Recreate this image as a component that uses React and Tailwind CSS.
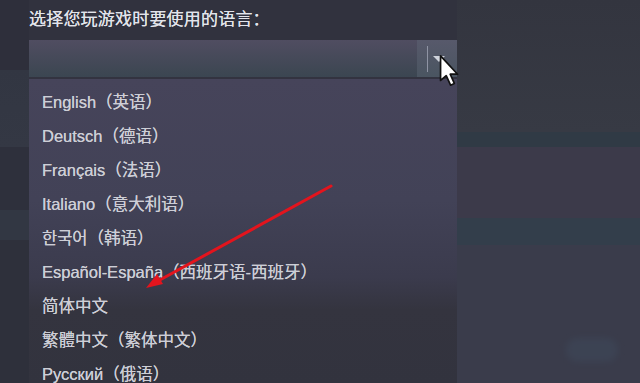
import React from "react";

const items = [
  "English（英语）",
  "Deutsch（德语）",
  "Français（法语）",
  "Italiano（意大利语）",
  "한국어（韩语）",
  "Español-España（西班牙语-西班牙）",
  "简体中文",
  "繁體中文（繁体中文）",
  "Русский（俄语）",
];

const font = {
  fontFamily:
    '"Liberation Sans", "Noto Sans CJK SC", "Noto Sans CJK KR", Arial, sans-serif',
};

export default function App() {
  return (
    <div
      className="relative w-[640px] h-[383px] overflow-hidden bg-[#30323e] flex"
      style={font}
    >
      {/* left strip */}
      <div className="w-[29px] flex flex-col">
        <div className="h-[70px] shrink-0 bg-[#2e2f3b]" />
        <div className="h-[77px] shrink-0 bg-gradient-to-b from-[#323642] to-[#343844]" />
        <div className="h-[63px] shrink-0 bg-[#2e303c]" />
        <div className="h-[30px] shrink-0 bg-[#323743]" />
        <div className="flex-1 bg-[#2e303b]" />
      </div>

      {/* center column */}
      <div className="w-[428px] h-full flex flex-col bg-[#31323e]">
        <div className="h-[40px] shrink-0 pt-[10px] text-[17px] leading-[20px] text-[#e2e4ea] tracking-[0.2px] [text-shadow:0_0_0.4px_#e2e4ea]">
          选择您玩游戏时要使用的语言：
        </div>
        <div className="h-[39px] shrink-0 flex bg-gradient-to-b from-[#504d61] to-[#3b4651] border-b-2 border-[#333340]">
          <div className="flex-1" />
          <div className="w-[40px] h-full flex items-center bg-gradient-to-b from-[#57596b] to-[#4a5561]">
            <div className="w-px h-[26px] bg-[#8f94a4] ml-[10px]" />
            <svg width="12" height="8" viewBox="0 0 12 8" className="ml-[5px] mt-[2px]">
              <path d="M0 0 L12 0 L6 6 Z" fill="#cfd3dc" />
            </svg>
          </div>
        </div>
        <div className="flex-1 min-h-0 overflow-hidden pt-[6px] bg-[linear-gradient(to_bottom,#46445a_0%,#424257_40%,#3b3b4d_65%,#34343f_76%,#32333e_100%)] text-[16.5px] text-[#cdced6] [text-shadow:0_0_0.5px_#cdced6]">
          {items.map((t) => (
            <div key={t} className="h-[34px] shrink-0 flex items-center pl-[13px] whitespace-nowrap">
              {t}
            </div>
          ))}
        </div>
      </div>

      {/* right area */}
      <div className="flex-1 flex flex-col">
        <div className="h-[132px] shrink-0 bg-gradient-to-b from-[#33353f] to-[#373a44]" />
        <div className="h-[15px] shrink-0 bg-[#303a45]" />
        <div className="h-[71px] shrink-0 bg-[#3c3a4a]" />
        <div className="h-[27px] shrink-0 bg-[#333e4b]" />
        <div className="flex-1 bg-[#3a3c4b]" />
      </div>

      {/* faint blurred logo bottom right */}
      <div className="absolute left-[566px] top-[338px] w-[52px] h-[24px] rounded-full bg-[#3f4a5c] opacity-50 blur-[3px]" />

      {/* red annotation arrow */}
      <svg
        className="absolute left-0 top-0 pointer-events-none"
        width="640"
        height="383"
        viewBox="0 0 640 383"
      >
        <line x1="331" y1="186" x2="158" y2="281" stroke="#e3141d" strokeWidth="3" strokeLinecap="round" />
        <path d="M146 288 L157 274 L163 284 Z" fill="#e3141d" />
      </svg>

      {/* mouse cursor */}
      <svg
        className="absolute left-[438px] top-[54px] pointer-events-none"
        width="24"
        height="34"
        viewBox="0 0 12 18"
      >
        <path
          d="M1 1 L1 14 L4 11.5 L6.3 16.5 L8.3 15.6 L6.1 10.7 L10 10.7 Z"
          fill="#ffffff"
          stroke="#111111"
          strokeWidth="0.9"
          strokeLinejoin="round"
        />
      </svg>
    </div>
  );
}
